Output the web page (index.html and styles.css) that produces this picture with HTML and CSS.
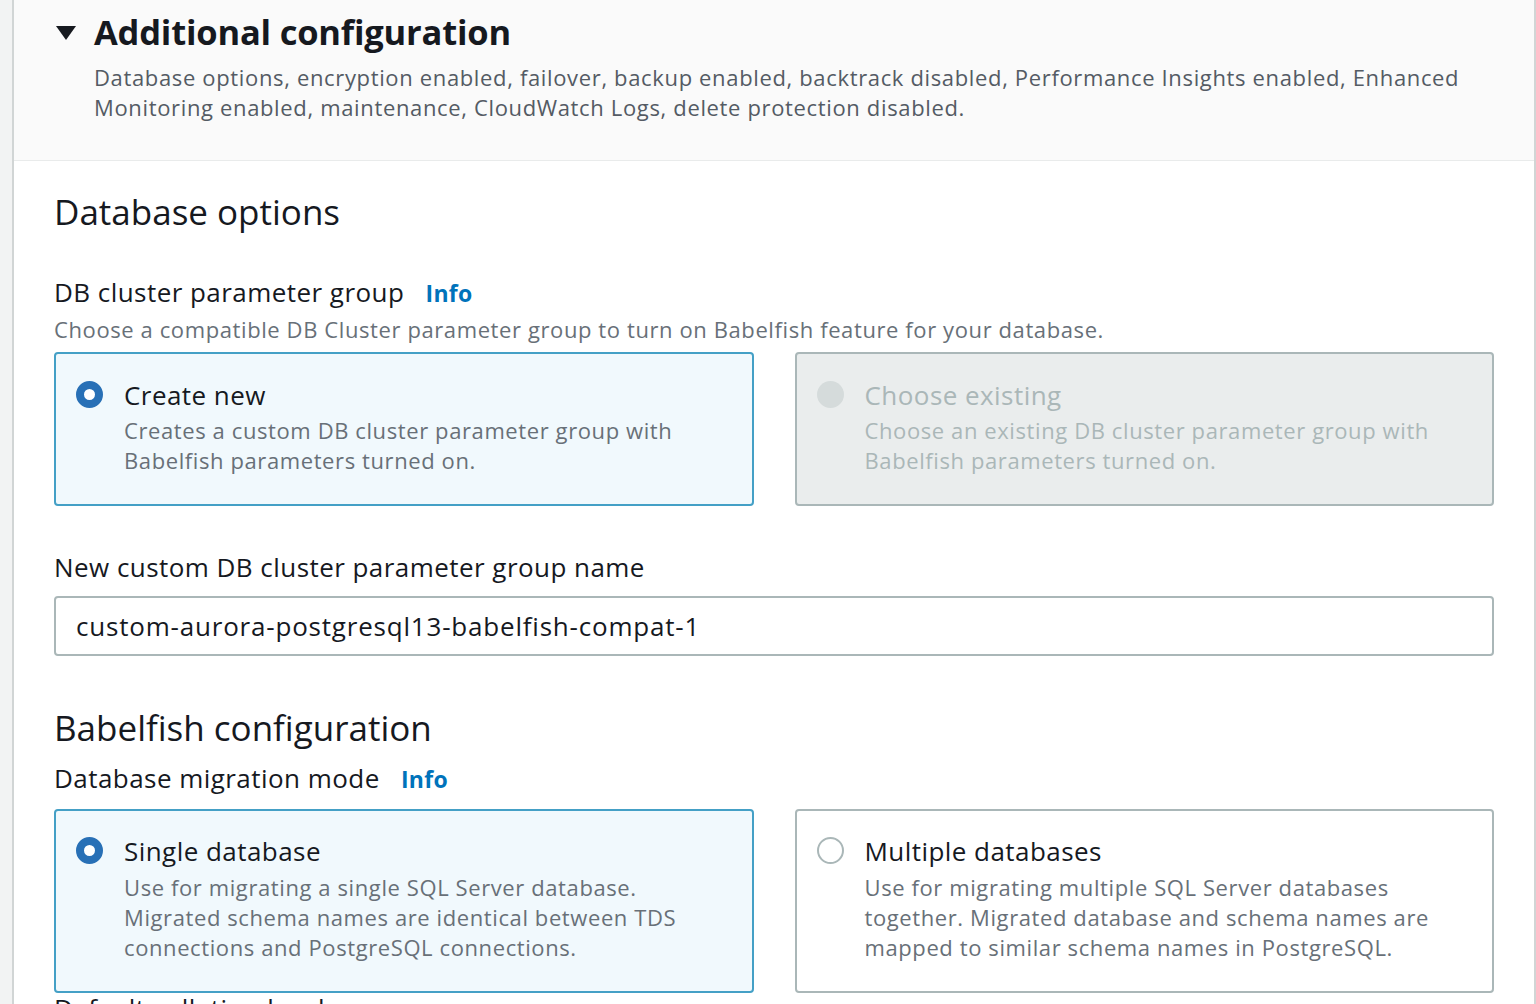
FILE: index.html
```html
<!DOCTYPE html>
<html lang="en">
<head>
<meta charset="utf-8">
<title>Additional configuration</title>
<link rel="stylesheet" href="styles.css">
</head>
<body>
<div class="panel">
  <div class="panel-header">
    <div class="title-row">
      <svg class="caret" width="20" height="14" viewBox="0 0 20 14"><polygon points="0,0 20,0 10,14" fill="#16191f"/></svg>
      <h2 class="title">Additional configuration</h2>
    </div>
    <p class="header-desc">Database options, encryption enabled, failover, backup enabled, backtrack disabled, Performance Insights enabled, Enhanced Monitoring enabled, maintenance, CloudWatch Logs, delete protection disabled.</p>
  </div>
  <div class="panel-body">
    <h3 class="section-title">Database options</h3>

    <div class="field-label first">DB cluster parameter group <a class="info">Info</a></div>
    <div class="field-desc">Choose a compatible DB Cluster parameter group to turn on Babelfish feature for your database.</div>
    <div class="tiles">
      <div class="tile selected">
        <span class="radio checked"></span>
        <div class="tile-text">
          <div class="tile-label">Create new</div>
          <div class="tile-desc">Creates a custom DB cluster parameter group with Babelfish parameters turned on.</div>
        </div>
      </div>
      <div class="tile disabled">
        <span class="radio off"></span>
        <div class="tile-text">
          <div class="tile-label">Choose existing</div>
          <div class="tile-desc">Choose an existing DB cluster parameter group with Babelfish parameters turned on.</div>
        </div>
      </div>
    </div>

    <div class="field-label name-label">New custom DB cluster parameter group name</div>
    <div class="input">custom-aurora-postgresql13-babelfish-compat-1</div>

    <h3 class="section-title babel">Babelfish configuration</h3>
    <div class="field-label mode-label">Database migration mode <a class="info">Info</a></div>
    <div class="tiles mode-tiles">
      <div class="tile selected">
        <span class="radio checked"></span>
        <div class="tile-text">
          <div class="tile-label">Single database</div>
          <div class="tile-desc">Use for migrating a single SQL Server database. Migrated schema names are identical between TDS connections and PostgreSQL connections.</div>
        </div>
      </div>
      <div class="tile">
        <span class="radio"></span>
        <div class="tile-text">
          <div class="tile-label">Multiple databases</div>
          <div class="tile-desc">Use for migrating multiple SQL Server databases together. Migrated database and schema names are mapped to similar schema names in PostgreSQL.</div>
        </div>
      </div>
    </div>
    <div class="field-label collation">Default collation locale</div>
  </div>
</div>
</body>
</html>
```

FILE: styles.css
```css
html, body {
  margin: 0;
  padding: 0;
}
body {
  background: #f2f3f3;
  font-family: "Open Sans", "Noto Sans", sans-serif;
  color: #16191f;
  height: 1004px;
  overflow: hidden;
  padding-left: 12px;
}
.panel {
  border-left: 2px solid #d1d5d5;
  border-right: 2px solid #d1d5d5;
  background: #ffffff;
  min-height: 1004px;
}
.panel-header {
  background: #fafafa;
  border-bottom: 1px solid #e9ebeb;
  padding: 10px 40px 37px 42px;
  height: 113px;
}
.title-row {
  display: flex;
  align-items: center;
  gap: 18px;
  height: 44px;
}
.caret {
  display: block;
  margin-top: 1px;
}
.title {
  margin: 0;
  font-size: 34.5px;
  font-weight: 700;
  line-height: 44px;
  letter-spacing: -0.2px;
}
.header-desc {
  margin: 8px 0 0 38px;
  font-size: 22px;
  line-height: 30px;
  letter-spacing: 0.65px;
  color: #545b64;
}
.panel-body {
  padding: 29px 40px 0 40px;
}
.section-title {
  margin: 0;
  font-size: 35px;
  font-weight: 400;
  line-height: 44px;
}
.field-label {
  font-size: 26px;
  line-height: 36px;
  letter-spacing: 0.45px;
}
.field-label.first { margin-top: 40px; }
.info {
  color: #0073bb;
  font-weight: 700;
  font-size: 23px;
  letter-spacing: 0.3px;
  margin-left: 14px;
}
.field-desc {
  margin-top: 3px;
  font-size: 22px;
  line-height: 30px;
  letter-spacing: 0.6px;
  color: #687078;
}
.tiles {
  display: grid;
  grid-template-columns: 1fr 1fr;
  gap: 41px;
  margin-top: 8px;
}
.tile {
  display: flex;
  align-items: flex-start;
  gap: 21px;
  border: 2px solid #aab7b8;
  border-radius: 4px;
  padding: 23px 20px 29px 20px;
  background: #ffffff;
}
.tile.selected {
  border-color: #44a0c6;
  background: #f1f9fd;
}
.tile.disabled {
  background: #eaeded;
  border-color: #aab7b8;
}
.radio {
  flex: none;
  width: 27px;
  height: 27px;
  border-radius: 50%;
  box-sizing: border-box;
  border: 2px solid #aab7b8;
  background: #fff;
  margin-top: 4px;
}
.radio.checked {
  border: 8.5px solid #2870b6;
  background: #fff;
}
.radio.off {
  border: none;
  background: #d5dbdb;
}
.tile-label {
  font-size: 26px;
  line-height: 36px;
  letter-spacing: 0.45px;
}
.tile-desc {
  margin-top: 2px;
  font-size: 22px;
  line-height: 30px;
  letter-spacing: 0.6px;
  color: #687078;
}
.tile.disabled .tile-label,
.tile.disabled .tile-desc {
  color: #aab7b8;
}
.name-label { margin-top: 43px; }
.input {
  margin-top: 11px;
  height: 56px;
  border: 2px solid #aab7b8;
  border-radius: 4px;
  padding: 0 20px;
  font-size: 26px;
  line-height: 56px;
  letter-spacing: 0.8px;
}
.section-title.babel { margin-top: 50px; }
.mode-label { margin-top: 10px; }
.mode-tiles { margin-top: 12px; }
.mode-tiles .tile { padding-top: 22px; padding-bottom: 29px; }
.mode-tiles .tile-desc { margin-top: 3px; }
.collation { margin-top: 2px; line-height: 26px; }
```
